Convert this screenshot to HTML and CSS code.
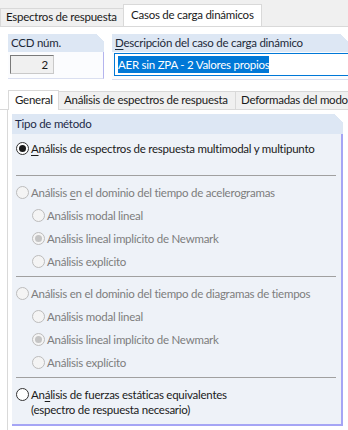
FILE: index.html
```html
<!DOCTYPE html>
<html lang="es">
<head>
    <meta charset="UTF-8">
    <title>Casos de carga dinámicos</title>
    <link rel="stylesheet" href="styles.css">
</head>
<body>
    <div class="tabs top-tabs">
        <div class="tab t1">Espectros de respuesta</div>
        <div class="tab t2 active">Casos de carga dinámicos</div>
    </div>

    <div class="head-row">
        <div class="panel ccd">
            <div class="panel-title">CCD núm.</div>
            <div class="panel-body">
                <div class="num-box">2</div>
            </div>
        </div>
        <div class="panel desc">
            <div class="panel-title"><u>D</u>escripción del caso de carga dinámico</div>
            <div class="panel-body">
                <div class="text-box"><span class="sel">AER sin ZPA - 2 Valores propios</span></div>
            </div>
        </div>
    </div>

    <div class="tabs sub-tabs">
        <div class="tab s1 active">General</div>
        <div class="tab s2">Análisis de espectros de respuesta</div>
        <div class="tab s3">Deformadas del modo</div>
    </div>

    <div class="page">
        <div class="group">
            <div class="group-title">Tipo de método</div>
            <div class="group-body">
                <div class="opt"><span class="radio checked"></span><span><u>A</u>nálisis de espectros de respuesta multimodal y multipunto</span></div>
                <hr class="sep first">

                <div class="opt off"><span class="radio"></span><span>Análisis <u>e</u>n el dominio del tiempo de acelerogramas</span></div>
                <div class="opt off sub"><span class="radio"></span><span>Análisis modal lineal</span></div>
                <div class="opt off sub"><span class="radio checked"></span><span>Análisis lineal implícito de Newmark</span></div>
                <div class="opt off sub"><span class="radio"></span><span>Análisis explícito</span></div>
                <hr class="sep">

                <div class="opt off"><span class="radio"></span><span>Análisis en el dominio del tiempo de diagramas de tiempos</span></div>
                <div class="opt off sub"><span class="radio"></span><span>Análisis modal lineal</span></div>
                <div class="opt off sub"><span class="radio checked"></span><span>Análisis lineal implícito de Newmark</span></div>
                <div class="opt off sub"><span class="radio"></span><span>Análisis explícito</span></div>
                <hr class="sep">

                <div class="opt two"><span class="radio"></span><span>An<u>á</u>lisis de fuerzas estáticas equivalentes<br>(espectro de respuesta necesario)</span></div>
            </div>
        </div>
    </div>
</body>
</html>
```

FILE: styles.css
```css
*{
    margin: 0;
    padding: 0;
    box-sizing: border-box;
}
body{
    width: 348px;
    height: 430px;
    overflow: hidden;
    background: #fff;
    font-family: Lato, "Liberation Sans", sans-serif;
    font-size: 11.5px;
    letter-spacing: -0.25px;
    color: #1a1a1a;
}
u{
    text-decoration: underline;
    text-underline-offset: 2px;
}

/* tab strips */
.tabs{
    display: flex;
    align-items: flex-end;
    white-space: nowrap;
}
.tab{
    flex: none;
    height: 18px;
    line-height: 16px;
    padding: 0 5px;
    background: #f0f0f0;
    border: 1px solid #d9d9d9;
    border-bottom: none;
    margin-right: -1px;
    overflow: hidden;
}
.tab.active{
    height: 22px;
    line-height: 20px;
    background: #fff;
    position: relative;
    z-index: 1;
}
.top-tabs{
    height: 27px;
    background: #f0f0f0;
    border-bottom: 1px solid #d9d9d9;
}
.t1{ width: 124px; }
.t2{ width: 139px; padding-left: 7px; }

/* header row */
.head-row{
    display: flex;
    gap: 8px;
    padding: 7px 0 0 8px;
    height: 63px;
}
.panel-title{
    height: 18px;
    line-height: 18px;
    padding-left: 3px;
    background: linear-gradient(225deg, transparent 5px, #dde7f4 5px);
    color: #1d2a3a;
}
.panel-body{
    border-right: 1px solid #b4b4ee;
    border-bottom: 1px solid #dadff0;
    background: #fbfcfe;
    padding: 3px 2px 4px 2px;
}
.ccd{
    width: 96px;
}
.num-box{
    width: 44px;
    height: 19px;
    line-height: 17px;
    text-align: right;
    padding-right: 5px;
    background: #f0f0f0;
    border: 1px solid #7a7a7a;
    border-right-color: #c9c9c9;
    border-bottom-color: #c9c9c9;
}
.desc{
    flex: 1;
}
.desc .panel-body{
    border-right: none;
    padding: 1px 0 3px 2px;
}
.text-box{
    height: 23px;
    line-height: 21px;
    padding-left: 3px;
    background: #fff;
    border: 1px solid #0078d7;
    border-right: none;
    white-space: nowrap;
}
.sel{
    background: #0078d7;
    color: #fff;
    padding: 2px 0;
}

/* second tab strip */
.sub-tabs{
    padding-left: 8px;
    height: 20px;
    border-bottom: 1px solid #d9d9d9;
}
.sub-tabs .tab.active{
    height: 20px;
    line-height: 18px;
    margin-bottom: -1px;
}
.s1{ width: 51px; padding-left: 6px; }
.s2{ width: 178px; }
.s3{ width: 120px; }

.page{
    margin-left: 7px;
    border-left: 1px solid #d9d9d9;
    padding: 4px 4px 0 4px;
    height: 322px;
}
.group{
    width: 331px;
}
.group-title{
    height: 20px;
    line-height: 19px;
    padding-left: 3px;
    background: linear-gradient(225deg, transparent 6px, #dde7f4 6px);
    color: #1d2a48;
}
.group-body{
    background: #eef2f8;
    border-right: 2px solid #a5a5f5;
    border-bottom: 2px solid #a5a5f5;
    padding: 3px 4px 6px 4px;
    height: 292px;
}
.opt{
    display: flex;
    align-items: center;
    gap: 2px;
    height: 23px;
    white-space: nowrap;
}
.opt.sub{
    padding-left: 16px;
}
.opt.off{
    color: #7d7d7d;
}
.opt.two{
    align-items: flex-start;
    height: auto;
    line-height: 15px;
    padding-top: 4px;
}
.opt.two .radio{
    margin-top: 1px;
}
.sep{
    border: none;
    border-top: 1px solid #a0a0a0;
    margin: 3px 1px 5px 0;
}
.sep.first{
    margin-top: 15px;
}

.radio{
    flex: none;
    width: 13px;
    height: 13px;
    border-radius: 50%;
    border: 1px solid #333;
    background: #fff;
    display: flex;
    align-items: center;
    justify-content: center;
}
.radio.checked::after{
    content: "";
    width: 7px;
    height: 7px;
    border-radius: 50%;
    background: #1a1a1a;
}
.off .radio{
    border-color: #bcbcbc;
    background: #f4f4f4;
}
.off .radio.checked::after{
    background: #c4c4c4;
}
```
